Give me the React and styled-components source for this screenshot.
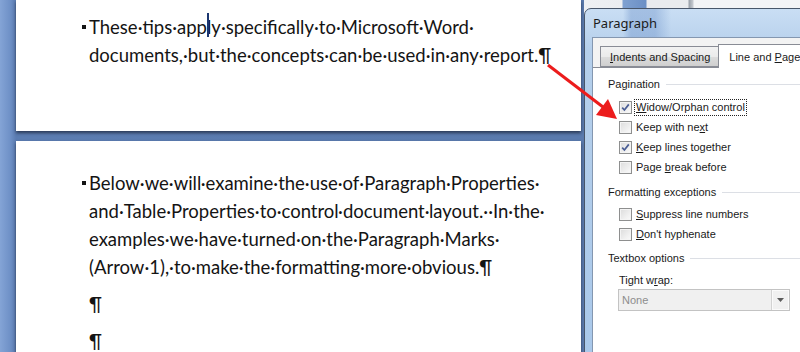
import React from 'react'
import styled, { createGlobalStyle } from 'styled-components'

const GlobalStyle = createGlobalStyle`
  html, body {
    margin: 0;
    padding: 0;
    width: 800px;
    height: 352px;
    overflow: hidden;
  }
  #root {
    width: 800px;
    height: 352px;
  }
`

// the text cursor sits over the "l" of "apply"
const CursorLine = () => (
  <>These·tips·app<CaretWrap>l<Caret /></CaretWrap>y·specifically·to·Microsoft·Word·</>
)

const pageOne = [
  {
    bullet: true,
    lines: [
      <CursorLine />,
      'documents,·but·the·concepts·can·be·used·in·any·report.¶',
    ],
  },
]

const pageTwo = [
  {
    bullet: true,
    lines: [
      'Below·we·will·examine·the·use·of·Paragraph·Properties·',
      'and·Table·Properties·to·control·document·layout.··In·the·',
      'examples·we·have·turned·on·the·Paragraph·Marks·',
      '(Arrow·1),·to·make·the·formatting·more·obvious.¶',
    ],
  },
  { lines: ['¶'] },
  { lines: ['¶'] },
]

const pagination = [
  { label: <><u>W</u>idow/Orphan control</>, checked: true, focused: true },
  { label: <>Keep with ne<u>x</u>t</> },
  { label: <><u>K</u>eep lines together</>, checked: true },
  { label: <>Page <u>b</u>reak before</> },
]

const exceptions = [
  { label: <><u>S</u>uppress line numbers</> },
  { label: <><u>D</u>on't hyphenate</> },
]

const Check = () => (
  <svg width="11" height="11" viewBox="0 0 11 11">
    <path d="M2.2 5.6 L4.4 8 L8.8 2.4" fill="none" stroke="#4a5d94" strokeWidth="1.7" />
  </svg>
)

const DocPage = ({ paragraphs, height, top }) => (
  <Page $height={height} $top={top}>
    {paragraphs.map((para, i) => (
      <Para key={i}>
        {para.lines.map((line, j) => (
          <Line key={j}>
            {para.bullet && j === 0 && <Bullet />}
            {line}
          </Line>
        ))}
      </Para>
    ))}
  </Page>
)

const CheckRow = ({ label, checked, focused }) => (
  <Row>
    <Box>{checked && <Check />}</Box>
    <Label $focused={focused}>{label}</Label>
  </Row>
)

const App = () => {
  return (
    <>
      <GlobalStyle />
      <Screen>
        <Workspace>
          <DocPage paragraphs={pageOne} height={131} top={13} />
          <DocPage paragraphs={pageTwo} top={28} />
        </Workspace>
        <ScrollArea />

        <Dialog>
          <TitleBar>Paragraph</TitleBar>
          <Client>
            <TabStrip>
              <Tab><span><u>I</u>ndents and Spacing</span></Tab>
              <Tab $active><span>Line and <u>P</u>age</span></Tab>
            </TabStrip>
            <TabPage>
              <GroupHeader>Pagination</GroupHeader>
              <Rows>
                {pagination.map((r, i) => <CheckRow key={i} {...r} />)}
              </Rows>
              <GroupHeader $gap={8}>Formatting exceptions</GroupHeader>
              <Rows $gap={5}>
                {exceptions.map((r, i) => <CheckRow key={i} {...r} />)}
              </Rows>
              <GroupHeader $gap={7}>Textbox options</GroupHeader>
              <FieldLabel>Tight w<u>r</u>ap:</FieldLabel>
              <Combo>
                <ComboText>None</ComboText>
                <ComboButton>
                  <svg width="7" height="4" viewBox="0 0 7 4">
                    <path d="M0 0 H7 L3.5 4 Z" fill="#5a5a5a" />
                  </svg>
                </ComboButton>
              </Combo>
            </TabPage>
          </Client>
        </Dialog>

        <Arrow width="800" height="352" viewBox="0 0 800 352">
          <line x1="548" y1="65" x2="603" y2="107" stroke="#ec1c1c" strokeWidth="3" />
          <polygon points="617,119 596,115 608,99" fill="#ec1c1c" />
        </Arrow>
      </Screen>
    </>
  )
}

export default App

const Screen = styled.div`
  position: relative;
  width: 800px;
  height: 352px;
  overflow: hidden;
  display: flex;
`

const Workspace = styled.div`
  width: 584px;
  flex: none;
  display: flex;
  flex-direction: column;
  gap: 10px;
  padding: 0 3px 0 16px;
  box-sizing: border-box;
  background: linear-gradient(to right, #84a4d6 0, #6f91c7 10px, #5b7cb1 16px, #5a7aad 100%);
`

const ScrollArea = styled.div`
  flex: 1;
  background: linear-gradient(
    to right,
    #eef0f3 0,
    #eceef1 38px,
    #7fa1d1 39px,
    #6b8fc5 62px,
    #e9ebee 63px,
    #e9ebee 104px,
    #9aa1aa 105px,
    #c6cad0 109px,
    #f3f4f6 110px
  );
`

const Page = styled.div`
  flex: ${p => (p.$height ? 'none' : '1')};
  height: ${p => (p.$height ? `${p.$height}px` : 'auto')};
  padding: ${p => p.$top}px 0 0 73px;
  box-sizing: border-box;
  background: #fff;
  box-shadow: 0 2px 3px rgba(25, 35, 55, 0.75);
  font-family: Lato, "Open Sans", sans-serif;
  font-size: 18.5px;
  color: #141414;
`

const Para = styled.div`
  margin-bottom: 9px;
`

const Line = styled.div`
  height: 28px;
  line-height: 28px;
  white-space: pre;
`

const Bullet = styled.span`
  display: inline-block;
  width: 4px;
  height: 4px;
  margin: 0 3px 0 -7px;
  background: #141414;
  vertical-align: 5px;
`

const CaretWrap = styled.span`
  position: relative;
`

const Caret = styled.span`
  position: absolute;
  left: 0;
  top: -3px;
  width: 2px;
  height: 24px;
  background: #1b3670;
`

const Dialog = styled.div`
  position: absolute;
  left: 584px;
  top: 8px;
  width: 240px;
  height: 360px;
  box-sizing: border-box;
  display: flex;
  flex-direction: column;
  padding-left: 7px;
  border: 1px solid #48566a;
  border-radius: 7px 7px 0 0;
  background:
    linear-gradient(to right, rgba(0, 0, 0, 0) 38px, rgba(95, 135, 195, 0.35) 46px, rgba(95, 135, 195, 0.35) 70px, rgba(0, 0, 0, 0) 86px) top / 100% 30px no-repeat,
    linear-gradient(to bottom, #c9def4, #b5cfeb 40px, #a9c8ea);
`

const TitleBar = styled.div`
  height: 28px;
  flex: none;
  display: flex;
  align-items: center;
  padding-left: 1px;
  font-family: "Noto Sans", "Open Sans", sans-serif;
  font-size: 13px;
  color: #1b1b1b;
`

const Client = styled.div`
  flex: 1;
  display: flex;
  flex-direction: column;
  background: #f3f3f3;
  border-top: 1px solid #8497b0;
  border-left: 1px solid #8497b0;
  font-family: "Liberation Sans", Arial, sans-serif;
  font-size: 11px;
  color: #1a1a1a;
`

const TabStrip = styled.div`
  display: flex;
  align-items: flex-end;
  height: 29px;
  padding-left: 7px;
  position: relative;
  z-index: 1;
`

const Tab = styled.div`
  height: ${p => (p.$active ? '24px' : '21px')};
  margin-left: ${p => (p.$active ? '-1px' : '0')};
  margin-bottom: ${p => (p.$active ? '-1px' : '0')};
  padding: 0 ${p => (p.$active ? '12px' : '8px')} 0 ${p => (p.$active ? '10px' : '9px')};
  display: flex;
  align-items: center;
  box-sizing: border-box;
  border: 1px solid #898c95;
  border-bottom: ${p => (p.$active ? 'none' : '1px solid #898c95')};
  background: ${p =>
    p.$active ? '#fff' : 'linear-gradient(to bottom, #f2f2f2 0, #ebebeb 50%, #dddddd 50%, #cfcfcf 100%)'};
  white-space: nowrap;
`

const TabPage = styled.div`
  flex: 1;
  background: #fff;
  border-top: 1px solid #898c95;
  padding: 9px 0 0 15px;
  display: flex;
  flex-direction: column;
`

const GroupHeader = styled.div`
  display: flex;
  align-items: center;
  height: 14px;
  margin-top: ${p => p.$gap || 0}px;
  white-space: nowrap;

  &::after {
    content: '';
    flex: 1;
    height: 1px;
    margin-left: 6px;
    background: #dcdfe5;
  }
`

const Rows = styled.div`
  display: flex;
  flex-direction: column;
  margin-top: ${p => p.$gap || 6}px;
  padding-left: 11px;
`

const Row = styled.div`
  display: flex;
  align-items: center;
  height: 20px;
  gap: 2px;
`

const Box = styled.div`
  width: 13px;
  height: 13px;
  box-sizing: border-box;
  display: flex;
  align-items: center;
  justify-content: center;
  border: 1px solid #8e8f8f;
  background: linear-gradient(135deg, #dcdcdc 0, #f2f2f2 70%, #fbfbfb 100%);
  box-shadow: inset 0 0 0 1px #f4f4f4;
`

const Label = styled.span`
  padding: 1px 1px;
  border: 1px dotted ${p => (p.$focused ? '#222' : 'transparent')};
  line-height: 13px;
  white-space: nowrap;
`

const FieldLabel = styled.div`
  margin: 8px 0 0 11px;
  height: 14px;
  line-height: 14px;
`

const Combo = styled.div`
  margin: 2px 0 0 10px;
  width: 172px;
  height: 22px;
  box-sizing: border-box;
  display: flex;
  border: 1px solid #c3c3c3;
  background: #f0f0f0;
`

const ComboText = styled.div`
  flex: 1;
  padding-left: 3px;
  display: flex;
  align-items: center;
  color: #8d8d8d;
`

const ComboButton = styled.div`
  width: 17px;
  display: flex;
  align-items: center;
  justify-content: center;
  border-left: 1px solid #d2d2d2;
  box-shadow: inset 0 0 0 1px #fafafa;
`

const Arrow = styled.svg`
  position: absolute;
  left: 0;
  top: 0;
  pointer-events: none;
`
